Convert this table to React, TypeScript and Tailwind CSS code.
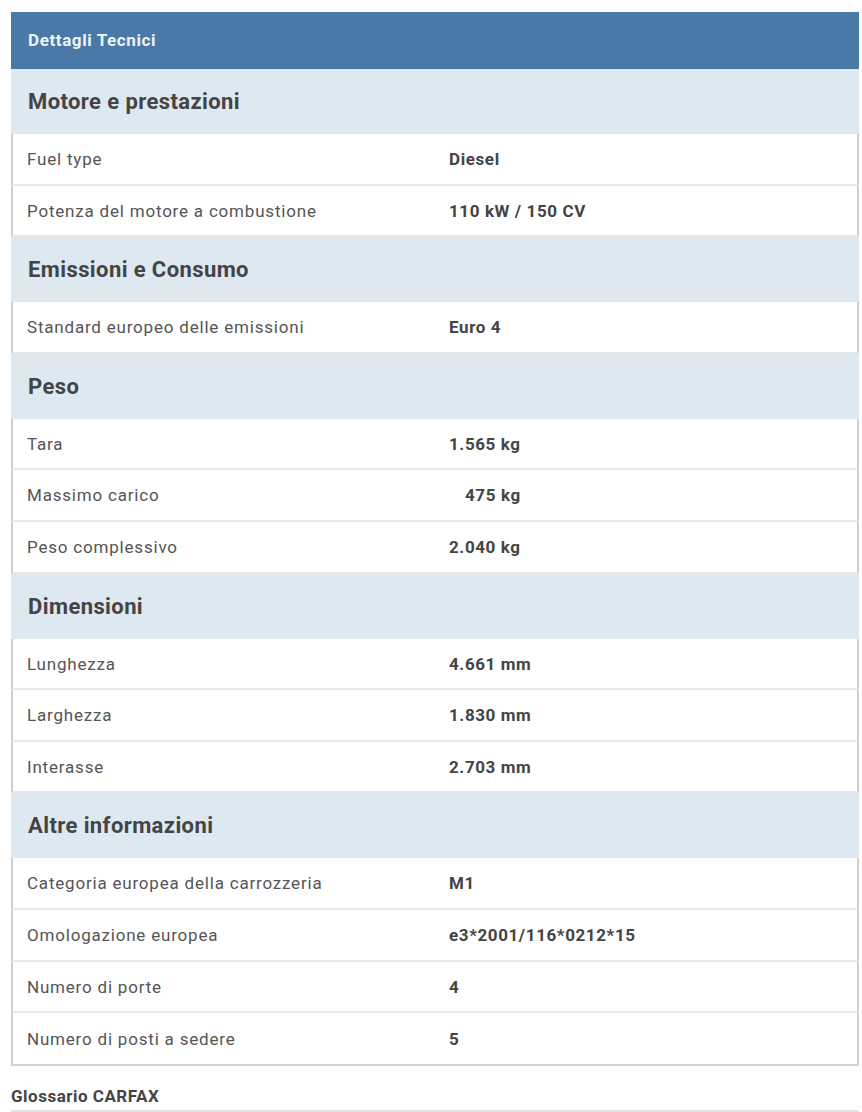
import React from "react";

type Row = { label: string; value: string; pad?: boolean };
type Section = { title: string; rows: Row[] };

const sections: Section[] = [
  {
    title: "Motore e prestazioni",
    rows: [
      { label: "Fuel type", value: "Diesel" },
      { label: "Potenza del motore a combustione", value: "110 kW / 150 CV" },
    ],
  },
  {
    title: "Emissioni e Consumo",
    rows: [{ label: "Standard europeo delle emissioni", value: "Euro 4" }],
  },
  {
    title: "Peso",
    rows: [
      { label: "Tara", value: "1.565 kg" },
      { label: "Massimo carico", value: "475 kg", pad: true },
      { label: "Peso complessivo", value: "2.040 kg" },
    ],
  },
  {
    title: "Dimensioni",
    rows: [
      { label: "Lunghezza", value: "4.661 mm" },
      { label: "Larghezza", value: "1.830 mm" },
      { label: "Interasse", value: "2.703 mm" },
    ],
  },
  {
    title: "Altre informazioni",
    rows: [
      { label: "Categoria europea della carrozzeria", value: "M1" },
      { label: "Omologazione europea", value: "e3*2001/116*0212*15" },
      { label: "Numero di porte", value: "4" },
      { label: "Numero di posti a sedere", value: "5" },
    ],
  },
];

export default function App() {
  return (
    <div
      className="w-[862px] h-[1112px] bg-white overflow-hidden pt-[12px] pl-[11px] pr-[3px]"
      style={{ fontFamily: "Roboto, 'Liberation Sans', sans-serif" }}
    >
      <div className="w-[848px]">
        <div className="h-[57px] bg-[#4a78a7] flex items-center pl-[17px] text-[17px] font-bold text-[#eef3f8] tracking-[0.6px]">
          Dettagli Tecnici
        </div>
        {sections.map((s, si) => (
          <div key={s.title}>
            <div className="h-[65px] bg-[#dee8f0] flex items-center pl-[17px] text-[22px] font-bold text-[#444444] tracking-[0.4px]">
              {s.title}
            </div>
            {s.rows.map((r, ri) => {
              const last = si === sections.length - 1 && ri === s.rows.length - 1;
              return (
                <div
                  key={r.label}
                  className={
                    "flex items-center pt-[2px] border-l-2 border-r-2 border-[#cfcfcf] " +
                    (last
                      ? "h-[53px] border-b-2 border-b-[#d2d2d2]"
                      : "h-[51.6px] border-b-2 border-b-[#e8e8e8]")
                  }
                >
                  <div className="w-[436px] pl-[14px] text-[17px] text-[#555555] tracking-[0.8px]">
                    {r.label}
                  </div>
                  <div
                    className={
                      "text-[17px] font-bold text-[#444444] tracking-[0.6px] " +
                      (r.pad ? "pl-[16px]" : "")
                    }
                  >
                    {r.value}
                  </div>
                </div>
              );
            })}
          </div>
        ))}
        <div className="mt-[18px] leading-[24px] text-[17px] font-bold text-[#444444] tracking-[0.5px] pb-[2px] border-b-2 border-[#e4e4e4]">
          Glossario CARFAX
        </div>
      </div>
    </div>
  );
}
